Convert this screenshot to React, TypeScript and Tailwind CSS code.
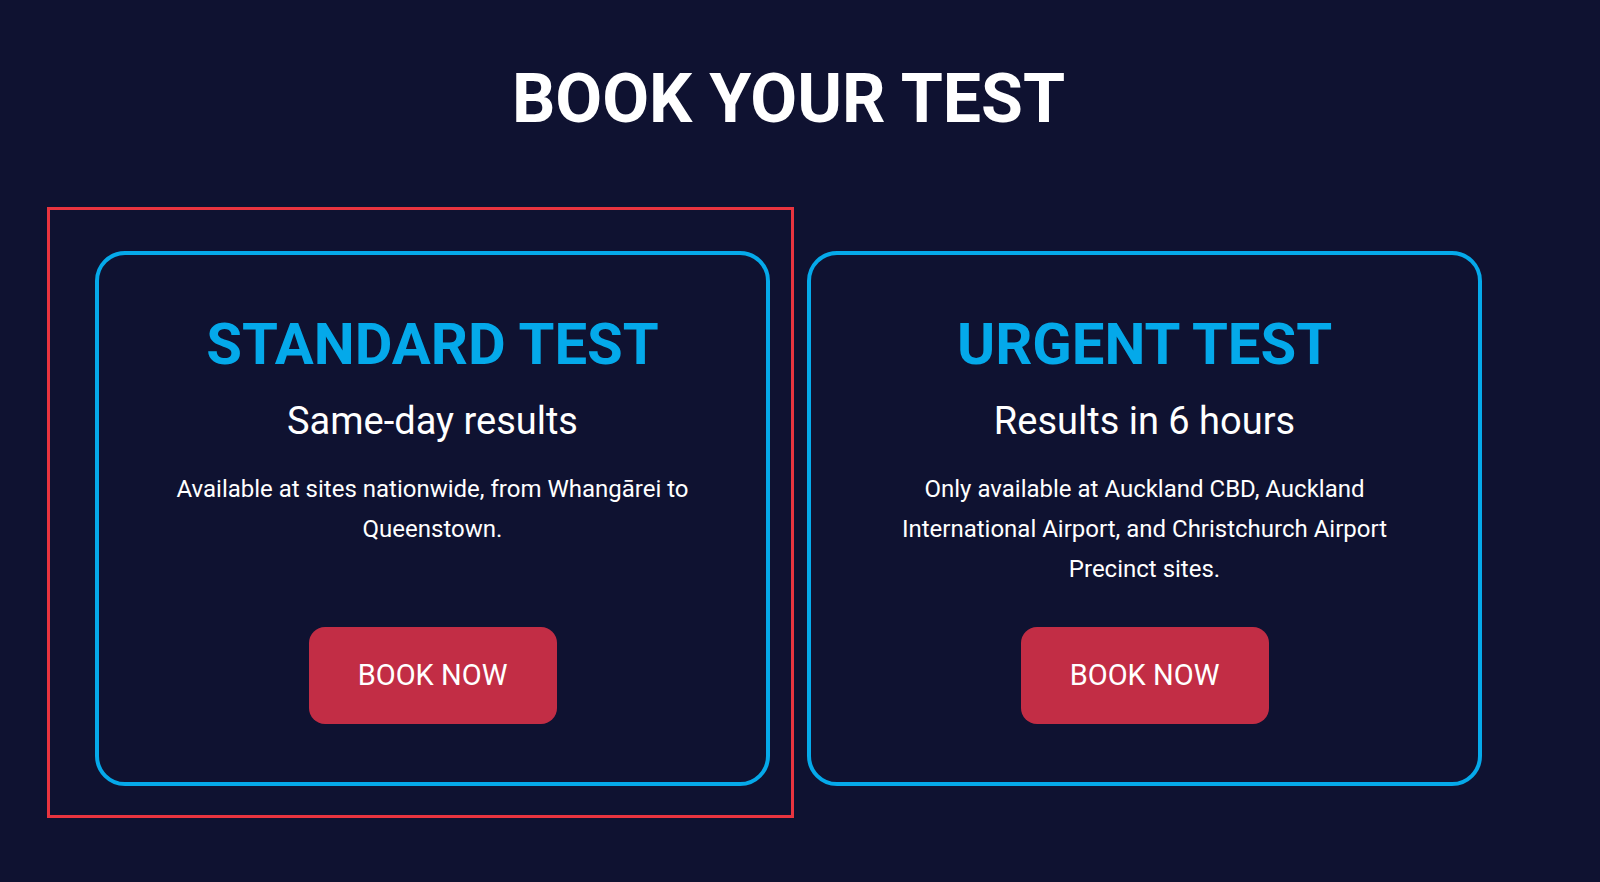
import React from 'react';

const tests = [
  {
    title: 'STANDARD TEST',
    subtitle: 'Same-day results',
    desc: 'Available at sites nationwide, from Whangārei to Queenstown.',
  },
  {
    title: 'URGENT TEST',
    subtitle: 'Results in 6 hours',
    desc: 'Only available at Auckland CBD, Auckland International Airport, and Christchurch Airport Precinct sites.',
  },
];

const TestCard: React.FC<{ title: string; subtitle: string; desc: string }> = ({ title, subtitle, desc }) => (
  <div className="flex flex-col items-center w-[675px] h-[535px] border-4 border-[#05a9ea] rounded-[30px] px-16 pt-[55px] pb-[58px] text-center">
    <h3 className="text-[58px] font-bold text-[#04a9ea] leading-[68px]">{title}</h3>
    <p className="mt-[21px] text-[38px] text-white leading-[44px]">{subtitle}</p>
    <p className="mt-[26px] text-[24px] text-white leading-[40px]">{desc}</p>
    <button className="mt-auto w-[248px] h-[97px] flex items-center justify-center rounded-[16px] bg-[#c22d45] text-white text-[29px]">
      BOOK NOW
    </button>
  </div>
);

export default function App() {
  return (
    <div className="min-h-screen bg-[#0f1231] pt-[59px] font-['Roboto',sans-serif]">
      <div className="ml-[95px] w-[1387px] text-center">
        <h2 className="text-[68px] font-bold text-white leading-[80px]">BOOK YOUR TEST</h2>
      </div>

      <div className="mt-[68px] pl-[47px] flex items-start">
        {/* selected card */}
        <div className="w-[747px] h-[611px] border-[3px] border-[#e8343f] pl-[45px] pt-[41px]">
          <TestCard {...tests[0]} />
        </div>
        <div className="ml-[13px] mt-[44px]">
          <TestCard {...tests[1]} />
        </div>
      </div>
    </div>
  );
}
